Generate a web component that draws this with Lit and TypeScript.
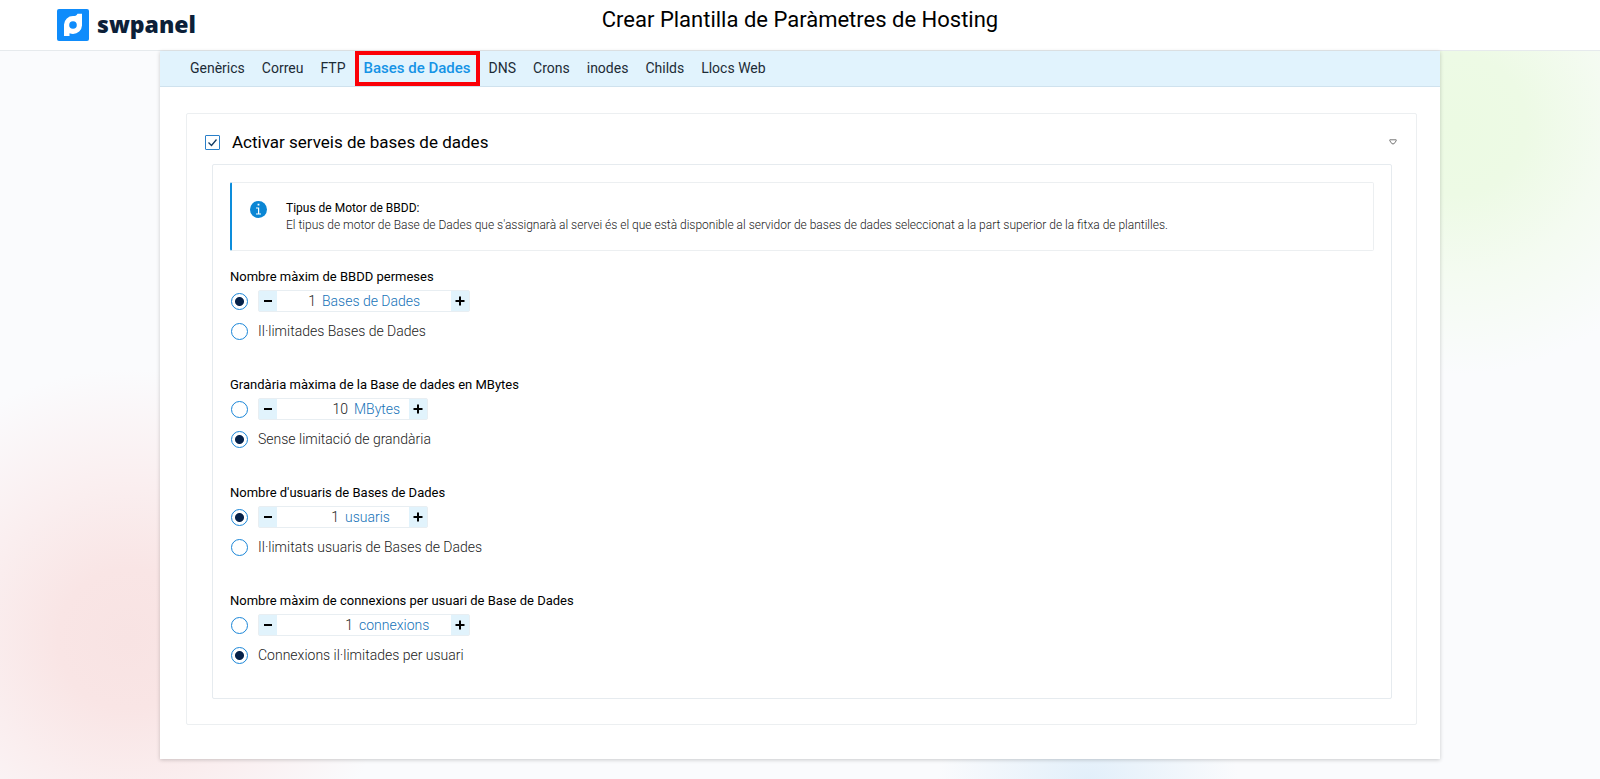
import { LitElement, html, css } from "lit";
import { customElement, property, state } from "lit/decorators.js";
import { classMap } from "lit/directives/class-map.js";

interface LimitGroup {
  id: string;
  title: string;
  value: number;
  unit: string;
  unitWidth: number;
  wide: boolean;
  unlimitedLabel: string;
  unlimited: boolean;
}

const TABS = ["Genèrics", "Correu", "FTP", "Bases de Dades", "DNS", "Crons", "inodes", "Childs", "Llocs Web"];

const GROUPS: LimitGroup[] = [
  { id: "bbdd", title: "Nombre màxim de BBDD permeses", value: 1, unit: "Bases de Dades", unitWidth: 129, wide: true, unlimitedLabel: "Il·limitades Bases de Dades", unlimited: false },
  { id: "size", title: "Grandària màxima de la Base de dades en MBytes", value: 10, unit: "MBytes", unitWidth: 55, wide: false, unlimitedLabel: "Sense limitació de grandària", unlimited: true },
  { id: "users", title: "Nombre d'usuaris de Bases de Dades", value: 1, unit: "usuaris", unitWidth: 64, wide: false, unlimitedLabel: "Il·limitats usuaris de Bases de Dades", unlimited: false },
  { id: "conn", title: "Nombre màxim de connexions per usuari de Base de Dades", value: 1, unit: "connexions", unitWidth: 92, wide: true, unlimitedLabel: "Connexions il·limitades per usuari", unlimited: true },
];

@customElement("limit-group")
class LimitGroupElement extends LitElement {
  @property({ attribute: false }) group!: LimitGroup;
  @state() private value = 0;

  static styles = css`
    :host { display: block; }
    .group { border: 0; margin: 0; padding: 0; min-width: 0; }
    .title { padding: 0; font-size: 13px; line-height: 19px; color: #000; }
    .row { display: flex; align-items: center; gap: 10px; height: 30px; padding-left: 1px; }
    .radio {
      appearance: none; box-sizing: border-box; width: 17px; height: 17px; margin: 0;
      border: 1px solid #1a86d8; border-radius: 50%; background: #fff;
    }
    .radio:checked { background: radial-gradient(circle, #06224a 4px, #fff 5px); }
    .option { font-size: 14px; font-weight: 300; color: #222; }
    .stepper {
      display: flex; box-sizing: border-box; width: 170px; height: 22px;
      border: 1px solid #e8eef2; border-radius: 2px;
    }
    .wide { width: 212px; }
    .step {
      display: flex; align-items: center; justify-content: center; width: 18px; padding: 0;
      border: 0; background: #e1f3fc;
    }
    .number {
      flex: 1; min-width: 0; padding: 0 6px 0 0; border: 0; background: none; outline: none;
      font: 300 14px/20px Roboto, sans-serif; text-align: right; color: #222;
    }
    .unit { font-size: 14px; font-weight: 300; line-height: 20px; color: #1673b8; }
  `;

  willUpdate(changed: Map<string, unknown>) {
    if (changed.has("group")) this.value = this.group.value;
  }

  private step(delta: number) {
    this.value = Math.max(0, this.value + delta);
  }

  render() {
    const g = this.group;
    return html`
      <fieldset class="group">
        <legend class="title">${g.title}</legend>
        <div class="row">
          <input class="radio" type="radio" name=${g.id} aria-label=${g.unit} ?checked=${!g.unlimited} />
          <div class=${classMap({ stepper: true, wide: g.wide })}>
            <button class="step" type="button" aria-label="-" @click=${() => this.step(-1)}>
              <svg width="10" height="10" viewBox="0 0 10 10"><path d="M1 5h8" stroke="#000" stroke-width="2" /></svg>
            </button>
            <input class="number" id="value" type="text" inputmode="numeric" .value=${String(this.value)} />
            <label class="unit" for="value" style="width:${g.unitWidth}px">${g.unit}</label>
            <button class="step" type="button" aria-label="+" @click=${() => this.step(1)}>
              <svg width="10" height="10" viewBox="0 0 10 10"><path d="M0.500 5h9M5 0.500v9" stroke="#000" stroke-width="2" /></svg>
            </button>
          </div>
        </div>
        <div class="row">
          <input class="radio" type="radio" id="unlimited" name=${g.id} ?checked=${g.unlimited} />
          <label class="option" for="unlimited">${g.unlimitedLabel}</label>
        </div>
      </fieldset>
    `;
  }
}

@customElement("app-root")
class AppRoot extends LitElement {
  @state() private active = "Bases de Dades";

  static styles = css`
    :host {
      display: flex; flex-direction: column; box-sizing: border-box; min-height: 100vh; padding-bottom: 20px;
      font-family: Roboto, "Liberation Sans", sans-serif; color: #000;
      background:
        radial-gradient(circle at 8% 82%, #f8e3e3 0, #f9e5e5 70px, #faeeef 150px, #fbe5e500 270px),
        radial-gradient(circle at 91% 16%, #ecfae3 0, #edfae5 70px, #f4fbf1 150px, #ecfbe200 250px),
        radial-gradient(ellipse at 68% 100%, #e2effa 0, #e2effa00 150px),
        #fafbfd;
    }
    .header {
      display: grid; grid-template-columns: 1fr auto 1fr; box-sizing: border-box; height: 51px; padding: 0 57px;
      background: #fff; border-bottom: 1px solid #e6eaed;
    }
    .brand { display: flex; align-items: center; gap: 8px; justify-self: start; color: #0c1f38; text-decoration: none; }
    .wordmark { font: 800 23px/30px "Open Sans", sans-serif; padding-bottom: 2px; }
    .heading { margin: 0; font-size: 22px; font-weight: 400; line-height: 40px; }
    .panel { margin: 0 10%; background: #fff; box-shadow: 0 1px 4px #0003; padding-bottom: 34px; }
    .tabs {
      display: flex; gap: 1px; box-sizing: border-box; height: 36px; padding-left: 22px;
      background: #e1f3fd; border-bottom: 1px solid #cfe2ee;
    }
    .tab { padding: 0 8px; font-size: 14px; line-height: 34px; color: #1c2b36; text-decoration: none; }
    .active {
      padding: 0 5px; border: 4px solid #fb0007; font-size: 15px; line-height: 27px; font-weight: 500; color: #1593e6;
    }
    .card { margin: 26px 23px 0 26px; padding: 16px 24px 25px 25px; border: 1px solid #eceff1; border-radius: 2px; }
    .summary { display: flex; align-items: center; height: 24px; margin: 0 -5px 10px -7px; }
    .enable { display: flex; align-items: center; gap: 12px; flex: 1; font-size: 17px; line-height: 24px; }
    .box {
      appearance: none; box-sizing: border-box; width: 15px; height: 15px; margin: 0;
      border: 1px solid #2a7fc9; border-radius: 1px; background: #fff;
    }
    .boxwrap { display: grid; }
    .boxwrap > * { grid-area: 1 / 1; }
    .tick { pointer-events: none; }
    .toggle { display: flex; padding: 0; border: 0; background: none; }
    .inner { padding: 17px; border: 1px solid #e6ebef; border-radius: 2px; }
    .info {
      display: flex; gap: 19px; box-sizing: border-box; height: 69px; padding: 17px 18px;
      border: 1px solid #eceff1; border-left: 2px solid #0d8ddb; border-radius: 2px;
    }
    .infoicon { flex: none; margin-top: 1px; }
    .infotitle { margin: 0; font-size: 12px; font-weight: 400; line-height: 17px; }
    .infotext { margin: 0; font-size: 12px; font-weight: 300; line-height: 17px; color: #222; }
    .groups { display: flex; flex-direction: column; gap: 29px; padding: 16px 0 11px; }
  `;

  render() {
    return html`
      <header class="header">
        <a class="brand" href="#">
          <svg width="32" height="32" viewBox="0 0 32 32">
            <rect width="32" height="32" rx="2" fill="#0f8cfb" />
            <path d="M7 27V15.500A9 9 0 0 1 16 7c2 0 3.500-.2 4.500-2.300H25V16.500A9 9 0 0 1 16 25c-1 0-2.500-.3-3.500-.8V27z" fill="#fff" />
            <circle cx="16" cy="16" r="3.800" fill="#0f8cfb" />
          </svg>
          <span class="wordmark">swpanel</span>
        </a>
        <h1 class="heading">Crear Plantilla de Paràmetres de Hosting</h1>
      </header>
      <main class="panel">
        <nav class="tabs">
          ${TABS.map((tab) => html`
            <a class=${classMap({ tab: true, active: tab === this.active })} href="#"
              @click=${(e: Event) => { e.preventDefault(); this.active = tab; }}>${tab}</a>`)}
        </nav>
        <section class="card">
          <div class="summary">
            <label class="enable">
              <span class="boxwrap">
                <input class="box" type="checkbox" checked />
                <svg class="tick" width="15" height="15" viewBox="0 0 15 15"><path d="M3.500 7.500l3 3 5-6" fill="none" stroke="#123a63" stroke-width="1.300" /></svg>
              </span>
              Activar serveis de bases de dades
            </label>
            <button class="toggle" type="button" aria-label="Activar serveis de bases de dades">
              <svg width="8" height="6" viewBox="0 0 8 6"><path d="M0.800 0.800h6.400v1L5 4.800H3L0.800 1.800z" fill="#fff" stroke="#777" /></svg>
            </button>
          </div>
          <div class="inner">
            <div class="info">
              <svg class="infoicon" width="17" height="17" viewBox="0 0 17 17">
                <circle cx="8.500" cy="8.500" r="8.500" fill="#0b86d4" />
                <path d="M7.600 2.800h1.800v1.600H7.600zM6 6.400h3.200v6H11v1H6v-1h2V7.400H6z" fill="#fff" />
              </svg>
              <div>
                <p class="infotitle">Tipus de Motor de BBDD:</p>
                <p class="infotext">El tipus de motor de Base de Dades que s'assignarà al servei és el que està disponible al servidor de bases de dades seleccionat a la part superior de la fitxa de plantilles.</p>
              </div>
            </div>
            <div class="groups">
              ${GROUPS.map((g) => html`<limit-group .group=${g}></limit-group>`)}
            </div>
          </div>
        </section>
      </main>
    `;
  }
}
